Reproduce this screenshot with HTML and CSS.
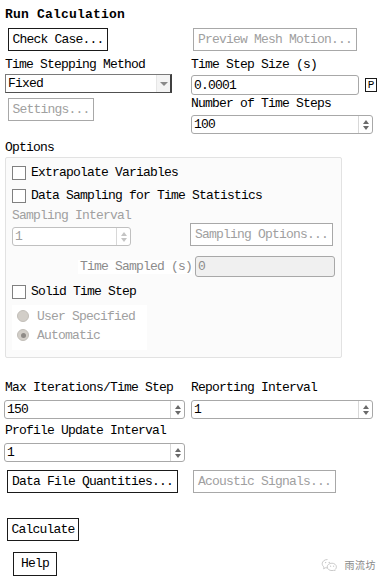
FILE: index.html
```html
<!DOCTYPE html>
<html>
<head>
<meta charset="utf-8">
<link rel="stylesheet" href="styles.css">
</head>
<body>
<div class="page">
  <div class="title">Run Calculation</div>
  <div class="top">
    <div class="col">
      <div class="btn check-case">Check Case...</div>
      <div class="label l1">Time Stepping Method</div>
      <div class="select"><span class="sel-val">Fixed</span><span class="sel-btn"><span class="tri-down"></span></span></div>
      <div class="btn dis settings">Settings...</div>
    </div>
    <div class="col">
      <div class="btn dis preview">Preview Mesh Motion...</div>
      <div class="label l1">Time Step Size (s)</div>
      <div class="input-row">
        <div class="input step-size">0.0001</div>
        <div class="pbtn">P</div>
      </div>
      <div class="label l2">Number of Time Steps</div>
      <div class="spin wide r1"><span class="val">100</span><span class="arrows"><span class="up"></span><span class="down"></span></span></div>
    </div>
  </div>

  <div class="label options-label">Options</div>
  <div class="group">
    <div class="check-row cr1"><span class="box"></span><span>Extrapolate Variables</span></div>
    <div class="check-row cr2"><span class="box"></span><span>Data Sampling for Time Statistics</span></div>
    <div class="label dis-text sampling-label">Sampling Interval</div>
    <div class="sampling-row">
      <div class="spin dis-spin small"><span class="val">1</span><span class="arrows"><span class="up"></span><span class="down"></span></span></div>
      <div class="btn dis sampling-opts">Sampling Options...</div>
    </div>
    <div class="sampled-row">
      <span class="sampled-label">Time Sampled (s)</span>
      <div class="input dis-input sampled">0</div>
    </div>
    <div class="check-row cr3"><span class="box"></span><span>Solid Time Step</span></div>
    <div class="radios">
      <div class="radio-row"><span class="radio"></span><span>User Specified</span></div>
      <div class="radio-row"><span class="radio on"></span><span>Automatic</span></div>
    </div>
  </div>

  <div class="bottom">
    <div class="col">
      <div class="label b1">Max Iterations/Time Step</div>
      <div class="spin left r2"><span class="val">150</span><span class="arrows"><span class="up"></span><span class="down"></span></span></div>
      <div class="label b2">Profile Update Interval</div>
      <div class="spin left r2"><span class="val">1</span><span class="arrows"><span class="up"></span><span class="down"></span></span></div>
    </div>
    <div class="col">
      <div class="label b1">Reporting Interval</div>
      <div class="spin wide r2"><span class="val">1</span><span class="arrows"><span class="up"></span><span class="down"></span></span></div>
    </div>
  </div>
  <div class="btn-row">
    <div class="btn dfq">Data File Quantities...</div>
    <div class="btn dis acoustic">Acoustic Signals...</div>
  </div>
  <div class="btn calc">Calculate</div>
  <div class="help-row">
    <div class="btn help">Help</div>
    <div class="mark">
      <svg width="17" height="13" viewBox="0 0 17 13"><path d="M6.5 1.5C3.5 1.5 1.2 3.4 1.2 5.8c0 1.3.7 2.4 1.800 3.2L2.6 10.8l2-1.1c.6.2 1.2.3 1.9.3" fill="none" stroke="#c4c4c4" stroke-width="0.9"/><path d="M11 5.2c-2.7 0-4.8 1.700-4.8 3.700s2.1 3.700 4.8 3.700c.5 0 1-.1 1.5-.2l1.6.9-.4-1.4c1-.7 1.700-1.800 1.700-3 0-2-2.1-3.700-4.4-3.700z" fill="none" stroke="#c4c4c4" stroke-width="0.9"/><circle cx="4.6" cy="4.6" r=".7" fill="#c4c4c4"/><circle cx="8.2" cy="4.4" r=".7" fill="#c4c4c4"/><circle cx="9.6" cy="8.2" r=".6" fill="#c4c4c4"/><circle cx="12.6" cy="8.2" r=".6" fill="#c4c4c4"/></svg>
      <span class="mark-text">雨流坊</span>
    </div>
  </div>
</div>
</body>
</html>
```

FILE: styles.css
```css
* { box-sizing: border-box; }
body {
  margin: 0;
  background: #ffffff;
  font-family: "Liberation Mono", "DejaVu Sans Mono", monospace;
  font-size: 13px;
  letter-spacing: -0.8px;
  color: #000000;
  width: 386px;
  height: 578px;
  overflow: hidden;
}
.page { padding: 7px 0 0 5px; }
.title {
  font-weight: bold;
  letter-spacing: 0.2px;
  line-height: 16px;
  height: 16px;
}
.label { line-height: 14px; height: 14px; white-space: nowrap; }
.top {
  display: grid;
  grid-template-columns: 186px 185px;
  margin-top: 5px;
}
.col { display: flex; flex-direction: column; align-items: flex-start; }

.btn {
  display: flex;
  align-items: center;
  justify-content: center;
  height: 23px;
  border: 1px solid #1a1a1a;
  background: #ffffff;
  white-space: nowrap;
  line-height: 14px;
}
.btn.dis { border-color: #a8a8a8; color: #a0a0a0; }
.check-case { margin-left: 3px; width: 100px; }
.settings { margin-left: 3px; margin-top: 5px; width: 86px; }
.preview { margin-left: 2px; width: 164px; }
.l1 { margin-top: 7px; }
.l2 { margin-top: 2px; }

.select {
  margin-top: 2px;
  width: 167px;
  height: 19px;
  border: 1px solid #7a7a7a;
  border-right: 2px solid #404040;
  border-bottom: 1px solid #505050;
  display: flex;
  align-items: center;
  justify-content: space-between;
  background: #fff;
}
.sel-val { padding-left: 2px; }
.sel-btn {
  width: 14px;
  height: 100%;
  display: flex;
  align-items: center;
  justify-content: center;
  background: #f4f4f4;
  border-left: 1px solid #e6e6e6;
}
.tri-down {
  width: 0; height: 0;
  border-left: 4px solid transparent;
  border-right: 4px solid transparent;
  border-top: 4px solid #8a8a8a;
}

.input-row { margin-top: 3px; display: flex; align-items: center; }
.input {
  height: 20px;
  border: 1px solid #a8a8a8;
  border-radius: 3px;
  padding-left: 2px;
  display: flex;
  align-items: center;
  background: #fff;
}
.step-size { width: 168px; }
.pbtn {
  margin-left: 6px;
  width: 12px;
  height: 14px;
  border: 1px solid #1a1a1a;
  font-size: 11px;
  letter-spacing: 0;
  display: flex;
  align-items: center;
  justify-content: center;
  line-height: 12px;
}

.spin {
  height: 19px;
  border: 1px solid #a8a8a8;
  border-radius: 3px;
  display: flex;
  align-items: stretch;
  justify-content: space-between;
  background: #fff;
}
.spin .val { padding-left: 2px; display: flex; align-items: center; }
.spin .arrows {
  width: 14px;
  border-left: 1px solid #d8d8d8;
  display: flex;
  flex-direction: column;
  align-items: center;
  justify-content: center;
  gap: 2px;
}
.up, .down { width: 0; height: 0; border-left: 3px solid transparent; border-right: 3px solid transparent; }
.up { border-bottom: 4px solid #6a6a6a; }
.down { border-top: 4px solid #6a6a6a; }
.spin.wide { width: 182px; }
.spin.r1 { margin-top: 4px; }
.spin.left { width: 181px; margin-left: -1px; }
.spin.r2 { margin-top: 5px; }
.spin.small { width: 119px; }
.dis-spin { color: #a0a0a0; border-color: #c0c0c0; }
.dis-spin .up { border-bottom-color: #c4c4c4; }
.dis-spin .down { border-top-color: #c4c4c4; }

.options-label { margin-top: 7px; }
.group {
  margin-top: 2px;
  width: 337px;
  height: 201px;
  background: #fbfbfb;
  border: 1px solid #e2e2e2;
  border-radius: 2px;
  padding-left: 6px;
  padding-right: 6px;
  display: flex;
  flex-direction: column;
}
.check-row { display: flex; align-items: center; gap: 5px; height: 14px; line-height: 14px; white-space: nowrap; }
.box { width: 14px; height: 14px; border: 1px solid #808080; background: #fff; flex: none; }
.cr1 { margin-top: 8px; }
.cr2 { margin-top: 9px; }
.cr3 { margin-top: 8px; }
.dis-text { color: #a0a0a0; }
.sampling-label { margin-top: 6px; }
.sampling-row { display: flex; align-items: flex-end; justify-content: space-between; margin-top: 0; padding-right: 2px; height: 23px; }
.sampling-opts { width: 143px; }
.sampled-row { margin-top: 10px; display: flex; align-items: center; justify-content: flex-end; height: 21px; }
.sampled-label { color: #8c8c8c; background: #fff; padding-left: 2px; margin-right: 3px; line-height: 14px; }
.dis-input { background: #f0f0f0; color: #8c8c8c; height: 21px; }
.sampled { width: 140px; }
.radios {
  margin-top: 6px;
  width: 135px;
  height: 45px;
  background: #ffffff;
  padding: 5px 0 0 5px;
  display: flex;
  flex-direction: column;
  gap: 7px;
  color: #a0a0a0;
}
.radio-row { display: flex; align-items: center; gap: 8px; height: 12px; white-space: nowrap; }
.radio {
  width: 12px; height: 12px; border-radius: 50%;
  background: #d2cec8;
  border: 1px solid #c2beb8;
  flex: none;
  display: flex; align-items: center; justify-content: center;
}
.radio.on::after { content: ""; width: 5px; height: 5px; border-radius: 50%; background: #8e8a86; }

.bottom {
  display: grid;
  grid-template-columns: 186px 185px;
  margin-top: 23px;
}
.b2 { margin-top: 5px; }
.btn-row { display: flex; margin-top: 8px; }
.dfq { margin-left: 2px; width: 171px; }
.acoustic { margin-left: 15px; width: 143px; }
.calc { margin-top: 25px; margin-left: 2px; width: 72px; }
.help-row { display: flex; align-items: center; margin-top: 11px; }
.help { margin-left: 8px; width: 44px; height: 24px; }
.mark { margin-left: auto; margin-right: 10px; display: flex; align-items: center; gap: 7px; }
.mark-text { font-family: "Noto Sans CJK SC", sans-serif; font-size: 10px; letter-spacing: 0.5px; color: #8a8a8a; }
```
